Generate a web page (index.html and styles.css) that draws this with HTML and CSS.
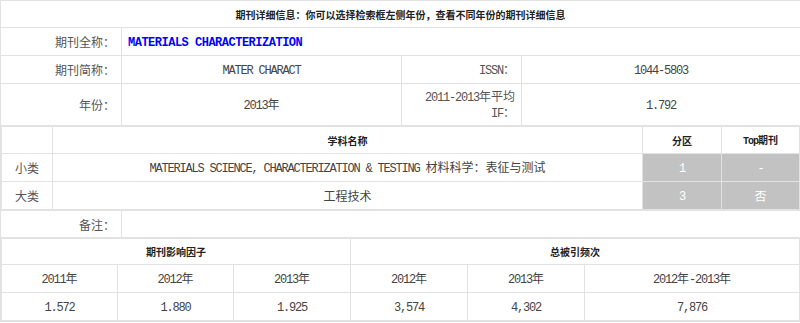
FILE: index.html
```html
<!DOCTYPE html>
<html>
<head>
<meta charset="utf-8">
<link rel="stylesheet" href="styles.css">
</head>
<body>
<table class="info">
  <colgroup><col class="c1"><col class="c2"><col class="c3"><col class="c4"></colgroup>
  <tr class="r-head"><th colspan="4">期刊详细信息：你可以选择检索框左侧年份，查看不同年份的期刊详细信息</th></tr>
  <tr class="r"><td class="lbl">期刊全称：</td><td colspan="3" class="full"><span class="enb">MATERIALS CHARACTERIZATION</span></td></tr>
  <tr class="r"><td class="lbl">期刊简称：</td><td class="val"><span class="en">MATER CHARACT</span></td><td class="lbl"><span class="en">ISSN</span>：</td><td class="val"><span class="en">1044-5803</span></td></tr>
  <tr class="r-tall"><td class="lbl">年份：</td><td class="val"><span class="en">2013</span>年</td><td class="lbl two"><span class="en">2011-2013</span>年平均<br><span class="en">IF</span>：</td><td class="val"><span class="en">1.792</span></td></tr>
  <tr><td colspan="4" class="nest">
    <table class="sub">
      <colgroup><col class="s1"><col class="s2"><col class="s3"><col class="s4"></colgroup>
      <tr class="sh"><th></th><th>学科名称</th><th>分区</th><th><span class="enh">Top</span>期刊</th></tr>
      <tr class="sr"><td class="cat">小类</td><td class="val"><span class="en">MATERIALS SCIENCE, CHARACTERIZATION &amp; TESTING </span>材料科学：表征与测试</td><td class="g"><span class="en">1</span></td><td class="g"><span class="en">-</span></td></tr>
      <tr class="sr"><td class="cat">大类</td><td class="val">工程技术</td><td class="g"><span class="en">3</span></td><td class="g">否</td></tr>
    </table>
  </td></tr>
  <tr class="r-note"><td class="lbl">备注：</td><td colspan="3"></td></tr>
  <tr><td colspan="4" class="nest">
    <table class="bot">
      <colgroup><col class="b1"><col class="b2"><col class="b3"><col class="b4"><col class="b5"><col class="b6"></colgroup>
      <tr class="bh"><th colspan="3">期刊影响因子</th><th colspan="3">总被引频次</th></tr>
      <tr class="br"><td><span class="en">2011</span>年</td><td><span class="en">2012</span>年</td><td><span class="en">2013</span>年</td><td><span class="en">2012</span>年</td><td><span class="en">2013</span>年</td><td><span class="en">2012</span>年<span class="en">-2013</span>年</td></tr>
      <tr class="br"><td><span class="en">1.572</span></td><td><span class="en">1.880</span></td><td><span class="en">1.925</span></td><td><span class="en">3,574</span></td><td><span class="en">4,302</span></td><td><span class="en">7,876</span></td></tr>
    </table>
  </td></tr>
</table>
</body>
</html>
```

FILE: styles.css
```css
html, body {
  margin: 0;
  padding: 0;
  background: #fff;
}
body {
  font-family: "Noto Sans CJK SC", sans-serif;
  font-size: 12px;
  color: #444;
}
table {
  border-collapse: collapse;
  table-layout: fixed;
}
.info {
  width: 800px;
}
td, th {
  border: 1px solid #e2e2e2;
  padding: 0;
  line-height: 13px;
  vertical-align: middle;
}
th {
  font-size: 10px;
  font-weight: bold;
  color: #222;
  text-align: center;
}
.c1 { width: 121px; }
.c2 { width: 280px; }
.c3 { width: 120px; }
.c4 { width: 279px; }

.r-head th { height: 26px; }
.r td { height: 27px; }
.r-note td { height: 26px; }
.r-tall td { height: 41px; }

.lbl {
  text-align: right;
  padding-right: 6px;
  color: #555;
}
.val {
  text-align: center;
}
.full {
  text-align: left;
  padding-left: 6px;
}
.en {
  font-family: "Liberation Mono", monospace;
  letter-spacing: -1.2px;
}
.enb {
  font-family: "Liberation Mono", monospace;
  font-weight: bold;
  letter-spacing: -0.5px;
  color: #0000ff;
}
.enh {
  font-family: "Liberation Mono", monospace;
  font-size: 10px;
  letter-spacing: -1px;
}
.nest {
  padding: 0;
}
.sub, .bot {
  width: 100%;
  border: 1px solid #e2e2e2;
}
.s1 { width: 51px; }
.s2 { width: 590px; }
.s3 { width: 79px; }
.s4 { width: 78px; }
.sh th { height: 26px; }
.sr td { height: 27px; }
.cat {
  text-align: center;
  color: #555;
}
.g {
  background: #c2c2c2;
  color: #fff;
  text-align: center;
}
.b1, .b2 { width: 116px; }
.b3, .b4, .b5 { width: 117px; }
.b6 { width: 215px; }
.bh th { height: 25px; }
.br td {
  height: 27px;
  text-align: center;
}
```
